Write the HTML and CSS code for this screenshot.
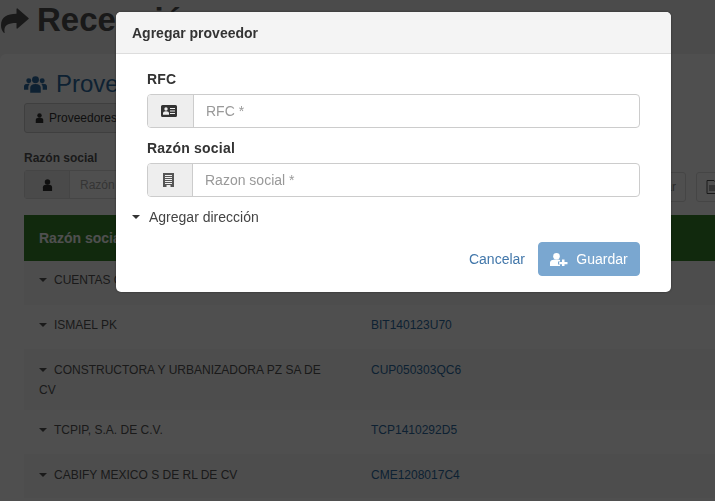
FILE: index.html
```html
<!DOCTYPE html>
<html lang="es">
<head>
<meta charset="utf-8">
<title>Agregar proveedor</title>
<link rel="stylesheet" href="styles.css">
</head>
<body>
<div class="page">
  <h1 class="page-title">
    <svg class="title-icon" viewBox="0 0 28 25"><path d="M27.500 10 16.500.5a.6.6 0 0 0-1 .5v4.800C6 5.800 0 9 0 17.500c0 3 1.200 5.800 3 7.500.4.300.7 0 .6-.4C2.500 18 6 15 15.500 15v5c0 .6.600.8 1 .5l11-9.500a.7.7 0 0 0 0-1z"/></svg>
    <span>Recepción</span>
  </h1>
  <section class="panel">
    <h2 class="panel-title">
      <svg class="users-icon" viewBox="0 0 24 18"><circle cx="12" cy="4.500" r="3.600"/><circle cx="5" cy="5.500" r="2.600"/><circle cx="19" cy="5.500" r="2.600"/><path d="M6.500 18v-5c0-2.500 2-4 5.500-4s5.500 1.500 5.500 4v5z"/><path d="M0 15v-3.500C0 9.500 1.500 8.800 5 8.800c.5 0 .8 0 1 .2-1.200 1-1.500 2.500-1.500 4v2zM24 15v-3.500c0-2-1.500-2.700-5-2.700-.5 0-.8 0-1 .2 1.200 1 1.500 2.500 1.500 4v2z"/></svg>
      <span>Proveedores</span>
    </h2>
    <div class="tabs">
      <span class="tab">
        <svg class="tiny-user" viewBox="0 0 12 13"><circle cx="6" cy="3.200" r="3"/><path d="M1 13V9c0-2 1.500-3 5-3s5 1 5 3v4z"/></svg>
        Proveedores
      </span>
    </div>
    <div class="filters">
      <div class="filter">
        <label class="filter-label">Razón social</label>
        <div class="filter-group">
          <span class="filter-addon"><svg class="small-user" viewBox="0 0 12 13"><circle cx="6" cy="3.200" r="3"/><path d="M1 13V9c0-2 1.500-3 5-3s5 1 5 3v4z"/></svg></span>
          <span class="filter-input">Razón social</span>
        </div>
      </div>
      <div class="filter-actions">
        <span class="ghost-btn ghost-wide">Buscar</span>
        <span class="ghost-btn ghost-icon"><svg class="doc-icon" viewBox="0 0 12 14"><path d="M1 .5h7l3 3v10H1z" fill="none" stroke="currentColor"/><path d="M3 6h6M3 8h6M3 10h6" stroke="currentColor"/></svg></span>
      </div>
    </div>
    <table class="grid">
      <thead><tr><th class="col-name">Razón social</th><th>RFC</th></tr></thead>
      <tbody>
        <tr><td class="col-name"><i class="caret"></i>CUENTAS CLARAS</td><td><a class="rfc">CCL140123U70</a></td></tr>
        <tr><td class="col-name"><i class="caret"></i>ISMAEL PK</td><td><a class="rfc">BIT140123U70</a></td></tr>
        <tr><td class="col-name"><i class="caret"></i>CONSTRUCTORA Y URBANIZADORA PZ SA DE CV</td><td><a class="rfc">CUP050303QC6</a></td></tr>
        <tr><td class="col-name"><i class="caret"></i>TCPIP, S.A. DE C.V.</td><td><a class="rfc">TCP1410292D5</a></td></tr>
        <tr><td class="col-name"><i class="caret"></i>CABIFY MEXICO S DE RL DE CV</td><td><a class="rfc">CME1208017C4</a></td></tr>
      </tbody>
    </table>
  </section>
</div>
<div class="backdrop"></div>
<div class="modal">
  <header class="modal-header">Agregar proveedor</header>
  <div class="modal-body">
    <div class="field">
      <label class="field-label">RFC</label>
      <div class="input-group">
        <span class="addon addon-rfc">
          <svg class="id-icon" viewBox="0 0 16 12"><path fill-rule="evenodd" d="M1.500 0h13A1.500 1.500 0 0 1 16 1.500v9a1.500 1.500 0 0 1-1.500 1.500h-13A1.500 1.500 0 0 1 0 10.500v-9A1.500 1.500 0 0 1 1.500 0zM9 3v1h5V3zm0 2.500v1h5v-1zM9 8v1h5V8zM5 2.300a1.700 1.700 0 1 0 0 3.400 1.700 1.700 0 0 0 0-3.400zM2 9.800h6V8.300C8 7 7 6.300 5 6.300S2 7 2 8.300z"/></svg>
        </span>
        <span class="input">RFC *</span>
      </div>
    </div>
    <div class="field">
      <label class="field-label">Razón social</label>
      <div class="input-group">
        <span class="addon addon-razon">
          <svg class="building-icon" viewBox="0 0 11 14"><path fill-rule="evenodd" d="M0 0h11v14H7.500v-2h-4v2H0zM2 2v1h7V2zm0 2v1h7V4zm0 2v1h7V6zm0 2v1h7V8zm0 2v1h7v-1z"/></svg>
        </span>
        <span class="input">Razon social *</span>
      </div>
    </div>
    <div class="address"><i class="caret caret-dark"></i>Agregar dirección</div>
    <div class="modal-actions">
      <a class="cancel">Cancelar</a>
      <button class="save" type="button">
        <svg class="user-plus" viewBox="0 0 18 13"><circle cx="6.500" cy="3.300" r="3.300"/><path d="M0 13v-3C0 7.500 2 6.500 6.500 6.500c1.500 0 2.600.1 3.500.4V8.500H8v3h2v1.500z"/><path d="M12 6.500h2.500V9H17.500v2.200h-3v2H12v-2H9.200V9H12z"/></svg>
        Guardar
      </button>
    </div>
  </div>
</div>
</body>
</html>
```
FILE: styles.css
```css
* { box-sizing: border-box; }
html, body { margin: 0; height: 100%; overflow: hidden; }
body {
  font-family: "Liberation Sans", Arial, sans-serif;
  font-size: 14px;
  color: #333;
  background: #f0f0f0;
}
.page { width: 715px; height: 501px; overflow: hidden; }
.page-title {
  display: flex;
  align-items: flex-start;
  gap: 8px;
  height: 54px;
  margin: 0;
  padding: 0 0 0 1px;
  font-size: 33px;
  line-height: 38px;
  font-weight: 700;
  color: #505050;
}
.title-icon { width: 28px; height: 25px; fill: #505050; margin-top: 8px; flex: none; }
.page-title span { margin-top: 1px; }
.panel {
  background: #fff;
  border-radius: 6px 6px 0 0;
  padding: 15px 24px 0;
  width: 760px;
  height: 447px;
}
.panel-title {
  display: flex;
  align-items: center;
  gap: 9px;
  height: 30px;
  margin: 0;
  font-size: 24px;
  font-weight: 400;
  color: #2d6ca3;
}
.users-icon { width: 23px; height: 18px; fill: #2d6ca3; }
.tabs { margin-top: 4px; }
.tab {
  display: inline-flex;
  align-items: center;
  gap: 5px;
  height: 30px;
  width: 150px;
  padding: 0 10px;
  font-size: 12px;
  color: #333;
  background: #eee;
  border: 1px solid #ccc;
  border-radius: 3px;
}
.tiny-user { width: 9px; height: 10px; fill: #333; }
.filters { display: flex; justify-content: space-between; align-items: flex-end; margin-top: 18px; width: 712px; }
.filter-label { display: block; font-size: 12px; font-weight: 700; color: #555; line-height: 14px; margin-bottom: 5px; }
.filter-group { display: flex; height: 29px; width: 300px; border: 1px solid #ddd; border-radius: 3px; }
.filter-addon { display: flex; align-items: center; justify-content: center; width: 45px; background: #eee; border-right: 1px solid #ddd; }
.small-user { width: 11px; height: 12px; fill: #333; }
.filter-input { padding: 7px 10px; font-size: 12px; color: #aaa; }
.filter-actions { display: flex; gap: 10px; margin-bottom: -3px; }
.ghost-btn { display: flex; align-items: center; height: 30px; border: 1px solid #ddd; border-radius: 3px; font-size: 12px; color: #888; }
.ghost-wide { width: 60px; justify-content: flex-end; padding-right: 9px; }
.ghost-icon { width: 40px; padding-left: 9px; color: #555; }
.doc-icon { width: 12px; height: 14px; }
.grid { border-collapse: collapse; table-layout: fixed; width: 691px; margin-top: 16px; font-size: 12px; }
.grid th { height: 46px; padding: 0 15px; text-align: left; font-size: 14px; font-weight: 700; color: #fff; background: #37862c; }
.grid td { height: 44px; padding: 10px 15px; line-height: 20px; color: #555; vertical-align: top; }
.grid td.col-name { padding-right: 20px; }
.col-name { width: 332px; }
.grid tbody tr:nth-child(odd) td { background: #f9f9f9; }
.grid tbody tr:nth-child(even) td { background: #fff; }
.grid tbody tr:nth-child(1) td { padding-top: 9px; }
.grid tbody tr:nth-child(3) td,
.grid tbody tr:nth-child(5) td { padding-top: 11px; }
.rfc { color: #2d6ca3; }
.caret {
  display: inline-block;
  vertical-align: middle;
  width: 0;
  height: 0;
  margin: -2px 7px 0 0;
  border-left: 4px solid transparent;
  border-right: 4px solid transparent;
  border-top: 4px solid #555;
}
.backdrop { position: fixed; inset: 0; background: rgba(0, 0, 0, .69); }
.modal {
  position: absolute;
  left: 116px;
  top: 12px;
  width: 555px;
  height: 280px;
  background: #fff;
  border-radius: 5px;
  overflow: hidden;
  box-shadow: 0 0 2px rgba(0, 0, 0, .5);
}
.modal-header {
  height: 42px;
  padding: 0 16px;
  line-height: 43px;
  font-size: 14px;
  font-weight: 700;
  color: #333;
  background: #f4f4f4;
  border-bottom: 1px solid #ddd;
}
.modal-body { padding: 16px 31px 0 16px; }
.field { padding-left: 15px; margin-bottom: 11px; }
.field-label { display: block; height: 24px; font-size: 14px; font-weight: 700; letter-spacing: .2px; line-height: 18px; color: #333; }
.input-group { display: flex; height: 34px; border: 1px solid #ccc; border-radius: 4px; overflow: hidden; }
.addon { display: flex; align-items: center; justify-content: center; background: #eee; border-right: 1px solid #ccc; padding-right: 4px; }
.addon-rfc { width: 46px; }
.addon-razon { width: 45px; }
.id-icon { width: 16px; height: 12px; fill: #333; }
.building-icon { width: 11px; height: 14px; fill: #555; }
.input { flex: 1; padding: 0 12px; line-height: 32px; font-size: 14px; color: #999; }
.address { margin-top: -1px; height: 20px; line-height: 20px; font-size: 14px; color: #444; }
.caret-dark { border-left-width: 4.500px; border-right-width: 4.500px; border-top: 4.500px solid #333; margin-right: 9px; }
.modal-actions { display: flex; justify-content: flex-end; align-items: center; gap: 13px; margin-top: 15px; }
.cancel { font-size: 14px; color: #4277aa; }
.save {
  display: flex;
  align-items: center;
  justify-content: center;
  gap: 8px;
  width: 102px;
  height: 34px;
  padding: 0;
  border: 1px solid #7aa7d0;
  border-radius: 4px;
  background: #7aa7d0;
  font-family: inherit;
  font-size: 14px;
  color: #fff;
}
.user-plus { width: 18px; height: 13px; fill: #fff; }
```
